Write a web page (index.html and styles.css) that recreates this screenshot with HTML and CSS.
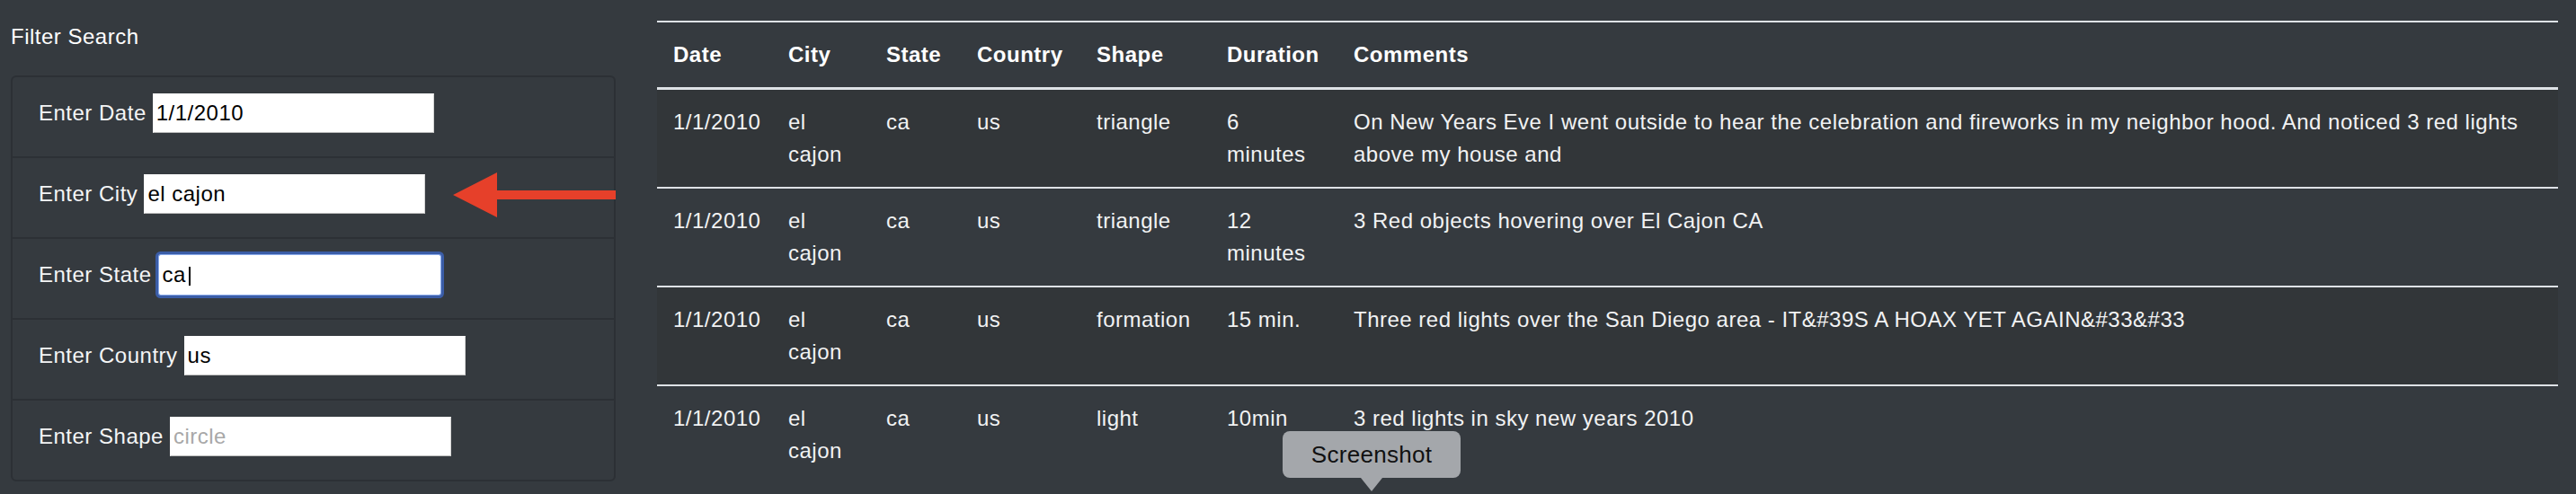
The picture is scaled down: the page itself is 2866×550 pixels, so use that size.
FILE: index.html
```html
<!DOCTYPE html>
<html lang="en">
<head>
<meta charset="utf-8">
<title>UFO Sightings Filter</title>
<link rel="stylesheet" href="styles.css">
</head>
<body>
<div class="page">
  <aside class="sidebar">
    <h2 class="sidebar-title">Filter Search</h2>
    <ul class="filter-list">
      <li class="filter-item">
        <label class="filter-label" for="date">Enter Date</label>
        <input class="filter-input" id="date" type="text" value="1/1/2010" readonly>
      </li>
      <li class="filter-item">
        <label class="filter-label" for="city">Enter City</label>
        <input class="filter-input" id="city" type="text" value="el cajon" readonly>
      </li>
      <li class="filter-item">
        <label class="filter-label" for="state">Enter State</label>
        <span class="field field-focused">
          <input class="filter-input is-focused" id="state" type="text" value="ca" readonly>
          <span class="caret"></span>
        </span>
      </li>
      <li class="filter-item">
        <label class="filter-label" for="country">Enter Country</label>
        <input class="filter-input" id="country" type="text" value="us" readonly>
      </li>
      <li class="filter-item">
        <label class="filter-label" for="shape">Enter Shape</label>
        <input class="filter-input" id="shape" type="text" placeholder="circle" readonly>
      </li>
    </ul>
    <svg class="arrow" width="181" height="50" viewBox="0 0 181 50" aria-hidden="true">
      <polygon points="0,25 49,0 49,20 181,20 181,30 49,30 49,50" fill="#e6402a"/>
    </svg>
  </aside>

  <main class="results">
    <table class="ufo-table">
      <colgroup>
        <col class="c-date"><col class="c-city"><col class="c-state"><col class="c-country"><col class="c-shape"><col class="c-duration"><col class="c-comments">
      </colgroup>
      <thead>
        <tr><th>Date</th><th>City</th><th>State</th><th>Country</th><th>Shape</th><th>Duration</th><th>Comments</th></tr>
      </thead>
      <tbody>
        <tr><td>1/1/2010</td><td>el cajon</td><td>ca</td><td>us</td><td>triangle</td><td>6 minutes</td><td>On New Years Eve I went outside to hear the celebration and fireworks in my neighbor hood. And noticed 3 red lights above my house and</td></tr>
        <tr><td>1/1/2010</td><td>el cajon</td><td>ca</td><td>us</td><td>triangle</td><td>12 minutes</td><td>3 Red objects hovering over El Cajon CA</td></tr>
        <tr><td>1/1/2010</td><td>el cajon</td><td>ca</td><td>us</td><td>formation</td><td>15 min.</td><td>Three red lights over the San Diego area - IT&amp;#39S A HOAX YET AGAIN&amp;#33&amp;#33</td></tr>
        <tr><td>1/1/2010</td><td>el cajon</td><td>ca</td><td>us</td><td>light</td><td>10min</td><td>3 red lights in sky new years 2010</td></tr>
      </tbody>
    </table>
  </main>
</div>
<div class="tooltip">Screenshot</div>
</body>
</html>
```

FILE: styles.css
```css
html, body {
  margin: 0;
  padding: 0;
}

body {
  width: 2866px;
  height: 550px;
  overflow: hidden;
  background: #353a3f;
  color: #fff;
  font-family: "Liberation Sans", Arial, sans-serif;
  font-size: 24px;
  line-height: 36px;
  letter-spacing: 0.5px;
  position: relative;
}

.page {
  display: flex;
  align-items: flex-start;
  gap: 46px;
  padding: 23px 20px 0 12px;
}

.sidebar {
  flex: none;
  width: 673px;
  position: relative;
}

.sidebar-title {
  margin: 0 0 25px;
  font-size: 24px;
  line-height: 36px;
  font-weight: 400;
  color: #fff;
}

.filter-list {
  list-style: none;
  margin: 0;
  padding: 0;
  border: 2px solid #2c3035;
  border-radius: 6px;
}

.filter-item {
  display: flex;
  align-items: baseline;
  gap: 7px;
  height: 70px;
  padding: 18px 30px 0 29px;
}

.filter-item + .filter-item {
  border-top: 2px solid #2c3035;
}

.filter-label {
  color: #f4f5f6;
  white-space: nowrap;
}

.filter-input {
  box-sizing: border-box;
  width: 313px;
  height: 44px;
  margin: 0;
  padding: 0 3px;
  border: 1px solid;
  border-color: #ffffff #d4d4d4 #bdbdbd #ffffff;
  border-radius: 0;
  background: #fff;
  color: #000;
  font-family: "Liberation Sans", Arial, sans-serif;
  font-size: 24px;
  letter-spacing: 0.5px;
  outline: none;
}

.filter-input::placeholder {
  color: #a8a8a8;
}

.field {
  position: relative;
  display: inline-block;
}

.field-focused {
  margin-left: 1px;
}

.filter-input.is-focused {
  border-color: #fff;
  border-radius: 2px;
  box-shadow: 0 0 0 1px #8aaaea, 0 0 0 4px #3b5da7;
}

.caret {
  position: absolute;
  left: 33px;
  top: 13px;
  width: 2px;
  height: 21px;
  background: #000;
}

.arrow {
  position: absolute;
  left: 492px;
  top: 169px;
  display: block;
}

.results {
  flex: none;
}

.ufo-table {
  width: 2115px;
  table-layout: fixed;
  border-collapse: separate;
  border-spacing: 0;
}

.c-date { width: 128px; }
.c-city { width: 109px; }
.c-state { width: 101px; }
.c-country { width: 133px; }
.c-shape { width: 145px; }
.c-duration { width: 141px; }
.c-comments { width: 1358px; }

.ufo-table th,
.ufo-table td {
  padding: 18px;
  text-align: left;
  font-size: 24px;
  line-height: 36px;
}

.ufo-table th {
  font-weight: 700;
  color: #fff;
  vertical-align: bottom;
  border-top: 2px solid #dee2e6;
  border-bottom: 3px solid #dee2e6;
}

.ufo-table td {
  color: #f1f2f3;
  vertical-align: top;
  border-top: 2px solid #dee2e6;
}

.ufo-table tbody tr:first-child td {
  border-top: 0;
}

.ufo-table tbody tr:nth-child(odd) td {
  background: #323639;
}

.tooltip {
  position: absolute;
  left: 1427px;
  top: 480px;
  width: 198px;
  height: 52px;
  border-radius: 8px;
  background: #a4a7ab;
  color: #111;
  font-size: 26px;
  line-height: 52px;
  letter-spacing: 0.3px;
  text-align: center;
}

.tooltip::after {
  content: "";
  position: absolute;
  left: 87px;
  top: 52px;
  border-left: 12px solid transparent;
  border-right: 12px solid transparent;
  border-top: 15px solid #a4a7ab;
}
```
